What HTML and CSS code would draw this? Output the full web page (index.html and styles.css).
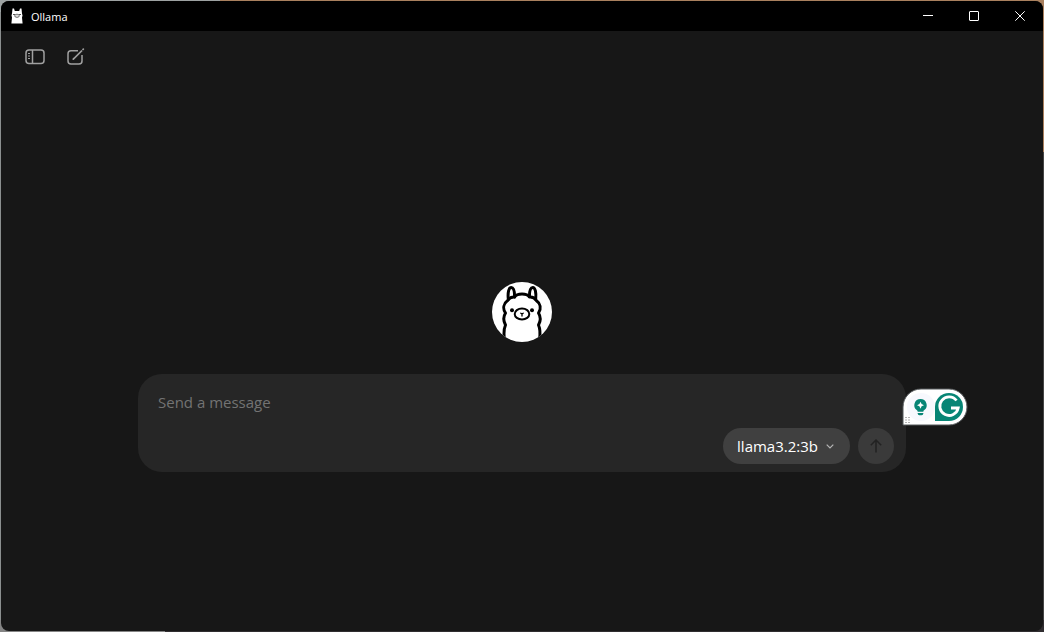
FILE: index.html
```html
<!DOCTYPE html>
<html lang="en">
<head>
  <meta charset="UTF-8">
  <meta name="viewport" content="width=device-width, initial-scale=1.0">
  <title>Ollama</title>
  <link rel="stylesheet" href="styles.css">
</head>
<body>
<div class="window">
  <header class="titlebar">
    <svg class="app-icon" width="12" height="16" viewBox="0 0 12 16">
      <path d="M1.500.5h1.500l.8 2.500h4.400L9 .5h1.500l.5 5 .5 2-.5 2 .6 6H.4l.6-6-.5-2 .5-2z" fill="#fff"/>
      <path d="M2 6.500h2M8 6.500h2" stroke="#555"/>
      <ellipse cx="6" cy="7.800" rx="2.300" ry="1.600" fill="#ddd" stroke="#555" stroke-width=".8"/>
    </svg>
    <span class="app-name">Ollama</span>
    <div class="window-controls">
      <button aria-label="Minimize">
        <svg width="10" height="10" viewBox="0 0 10 10"><path d="M0 4.500h10"/></svg>
      </button>
      <button aria-label="Maximize">
        <svg width="10" height="10" viewBox="0 0 10 10"><rect x=".5" y=".5" width="9" height="9" rx=".5"/></svg>
      </button>
      <button aria-label="Close">
        <svg width="10" height="10" viewBox="0 0 10 10"><path d="M.3.3l9.400 9.400M9.700.3L.3 9.700"/></svg>
      </button>
    </div>
  </header>

  <nav class="toolbar">
    <button aria-label="Toggle sidebar">
      <svg width="20" height="16" viewBox="0 0 20 16">
        <rect x="1" y="1" width="18" height="13.500" rx="3"/>
        <path d="M7.500 1v13.500"/>
        <path d="M3 4.500h2M3 7h2M3 9.500h2" stroke-width="1"/>
      </svg>
    </button>
    <button aria-label="New chat">
      <svg width="18" height="18" viewBox="0 0 18 18">
        <path d="M11 2.750H4a3 3 0 0 0-3 3V13a3 3 0 0 0 3 3h8a3 3 0 0 0 3-3V7"/>
        <path d="M7 10.500L15 2.500" stroke-width="1.700"/>
        <path d="M16 1.500l.3-.3M6.300 11.200l.5-.5" stroke-width="1.700" stroke-linecap="round"/>
      </svg>
    </button>
  </nav>

  <main class="chat">
    <svg class="logo" width="60" height="60" viewBox="0 0 60 60" role="img" aria-label="Ollama">
      <defs>
        <clipPath id="disc"><circle cx="30" cy="30" r="30"/></clipPath>
      </defs>
      <circle cx="30" cy="30" r="30" fill="#fff"/>
      <g clip-path="url(#disc)" fill="none" stroke="#000" stroke-width="3" stroke-linecap="round" stroke-linejoin="round">
        <!-- ears -->
        <path d="M16.300 17C15.600 11 16.800 5.400 19.200 5.400S22.600 10 22.600 14.500"/>
        <path d="M43.700 17C44.400 11 43.200 5.400 40.800 5.400S37.400 10 37.400 14.500"/>
        <!-- head and body -->
        <path d="M22.600 15C25 11 35 11 37.400 15C40.500 14.700 43 16.300 44.300 18.500C48.500 21.500 49.500 26.500 46.500 31C49 35 48.700 39 46.500 43C48.300 47 48.500 51 47.500 58"/>
        <path d="M22.600 15C19.500 14.700 17 16.300 15.700 18.500C11.500 21.500 10.500 26.500 13.500 31C11 35 11.300 39 13.500 43C11.700 47 11.500 51 12.500 58"/>
        <!-- muzzle -->
        <ellipse cx="30" cy="32" rx="7.300" ry="5.500" stroke-width="2"/>
        <path d="M28.800 31.200l1.200.8 1.200-.8M30 32v2" stroke-width="1.300"/>
      </g>
      <circle cx="20" cy="28.200" r="2"/>
      <circle cx="40" cy="28.200" r="2"/>
    </svg>

    <form class="composer">
      <textarea rows="1" placeholder="Send a message" aria-label="Send a message"></textarea>
      <div class="composer-actions">
        <button type="button" class="model-picker">
          llama3.2:3b
          <svg width="8" height="5" viewBox="0 0 8 5"><path d="M.7.700L4 4 7.300.700"/></svg>
        </button>
        <button type="submit" class="send" aria-label="Send">
          <svg width="12" height="14" viewBox="0 0 12 14"><path d="M6 13.500V1M.8 6.200L6 1l5.200 5.200"/></svg>
        </button>
      </div>

      <!-- writing assistant, floats over the corner of the box -->
      <div class="assistant">
        <svg width="66" height="38" viewBox="0 0 66 38">
          <path d="M1 37V19A18 18 0 0 1 19 1h28a18 18 0 0 1 0 36z" fill="#fff" stroke="#55595b"/>
          <circle cx="19" cy="19" r="14" fill="#f7f8fd"/>
          <path d="M18.500 11a6.200 6.200 0 0 0-3.800 11.100c.7.500 1 1 1 1.700h5.600c0-.7.300-1.200 1-1.700A6.200 6.200 0 0 0 18.500 11z" fill="#078575"/>
          <path d="M15.700 25h5.600v.5a1.700 1.700 0 0 1-1.700 1.700h-2.200a1.700 1.700 0 0 1-1.700-1.700z" fill="#078575"/>
          <path d="M18.500 13.700l1.100 2.400 2.400 1.100-2.400 1.100-1.100 2.400-1.100-2.400-2.400-1.100 2.400-1.100z" fill="#fff"/>
          <path d="M33 33V19a14 14 0 1 1 14 14z" fill="#078575"/>
          <path d="M54.500 12.500A9.300 9.300 0 1 0 56.200 20H49" fill="none" stroke="#fff" stroke-width="2.800"/>
          <path d="M3.500 29.500h1M6.500 29.500h1M3.500 32h1M6.500 32h1M3.500 34.500h1M6.500 34.500h1" stroke="#666"/>
        </svg>
      </div>
    </form>
  </main>
</div>
</body>
</html>
```
FILE: styles.css
```css
* {
  margin: 0;
  padding: 0;
  box-sizing: border-box;
}

body {
  min-height: 100vh;
  padding: 1px;
  display: flex;
  background:
    linear-gradient(90deg, #9da2a2 220px, #a9805e 220px) top / 100% 12px no-repeat,
    linear-gradient(90deg, #858585 165px, #302d30 165px) bottom / 100% 12px no-repeat,
    linear-gradient(#a9805e 152px, #454545 152px) right / 12px 100% no-repeat,
    #8b8f8f;
  font-family: "Segoe UI", "Open Sans", "Noto Sans", sans-serif;
  color: #fff;
}

button {
  border: none;
  background: none;
  color: inherit;
  font: inherit;
  cursor: pointer;
}

svg {
  display: block;
}

.window {
  flex: 1;
  display: flex;
  flex-direction: column;
  border-radius: 8px;
  overflow: hidden;
  background: #171717;
}

.titlebar {
  height: 30px;
  padding-left: 10px;
  display: flex;
  align-items: center;
  background: #000;
  font-size: 11px;
}

.app-name {
  margin-left: 8px;
}

.window-controls {
  height: 100%;
  margin-left: auto;
  display: flex;
}

.window-controls button {
  width: 46px;
  display: flex;
  align-items: center;
  justify-content: center;
}

.window-controls svg {
  fill: none;
  stroke: #fff;
}

.toolbar {
  height: 52px;
  padding: 0 24px;
  display: flex;
  align-items: center;
  gap: 22px;
}

.toolbar svg {
  fill: none;
  stroke: #a1a1a1;
  stroke-width: 1.5;
}

.chat {
  flex: 1;
  padding: 40px 16px 0;
  display: flex;
  flex-direction: column;
  align-items: center;
  justify-content: center;
  gap: 32px;
}

.composer {
  position: relative;
  width: 100%;
  max-width: 768px;
  padding: 16px 12px 8px 20px;
  display: flex;
  flex-direction: column;
  gap: 14px;
  border-radius: 24px;
  background: #262626;
}

.composer textarea {
  height: 24px;
  border: none;
  outline: none;
  resize: none;
  background: none;
  color: #fff;
  font-family: inherit;
  font-size: 15px;
  line-height: 24px;
}

.composer textarea::placeholder {
  color: #737373;
}

.composer-actions {
  display: flex;
  justify-content: flex-end;
  gap: 8px;
}

.model-picker {
  height: 36px;
  padding: 0 16px 0 14px;
  display: flex;
  align-items: center;
  gap: 8px;
  border-radius: 18px;
  background: #404040;
  font-size: 15px;
}

.model-picker svg {
  fill: none;
  stroke: #b5b5b5;
  stroke-width: 1.2;
}

.send {
  width: 36px;
  height: 36px;
  display: flex;
  align-items: center;
  justify-content: center;
  border-radius: 50%;
  background: #3a3a3a;
}

.send svg {
  fill: none;
  stroke: #222;
  stroke-width: 1.5;
}

.assistant {
  position: absolute;
  top: 14px;
  right: -62px;
}
```
